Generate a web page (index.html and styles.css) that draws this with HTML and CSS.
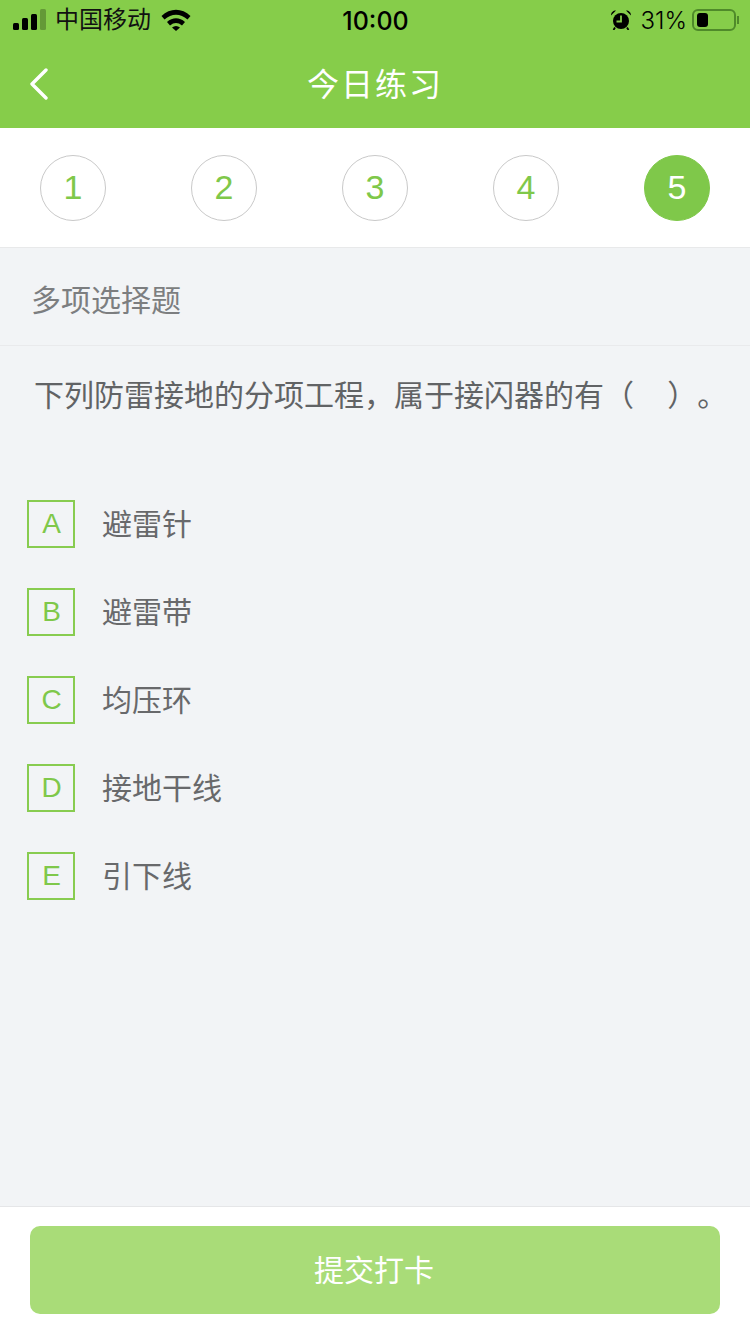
FILE: index.html
```html
<!DOCTYPE html>
<html lang="zh">
<head>
    <meta charset="UTF-8">
    <meta name="viewport" content="width=device-width, initial-scale=1.0">
    <title>今日练习</title>
    <link rel="stylesheet" href="styles.css">
</head>
<body>
    <div class="page">
        <header class="header">
            <div class="status-bar">
                <div class="status-left">
                    <svg class="signal" width="35" height="22" viewBox="0 0 35 22">
                        <rect x="1" y="14" width="6" height="7" rx="1.5" fill="#000"/>
                        <rect x="10" y="9" width="6" height="12" rx="1.5" fill="#000"/>
                        <rect x="19" y="5" width="6" height="16" rx="1.5" fill="#000"/>
                        <rect x="28" y="0" width="6" height="21" rx="1.5" fill="#000" opacity="0.25"/>
                    </svg>
                    <span class="carrier">中国移动</span>
                    <svg class="wifi" width="30" height="22" viewBox="0 0 30 22">
                        <path d="M0.500 7C9 -1.500 21 -1.500 29.500 7L26.500 10.500C19.500 4.200 10.500 4.200 3.500 10.500Z" fill="#000"/>
                        <path d="M6 13C11.500 8 18.500 8 24 13L21 16.500C17 13.200 13 13.200 9 16.500Z" fill="#000"/>
                        <path d="M11 18.500C13.500 16.500 16.500 16.500 19 18.500L15 22Z" fill="#000"/>
                    </svg>
                </div>
                <div class="status-time">10:00</div>
                <div class="status-right">
                    <svg class="alarm" width="20" height="20" viewBox="0 0 20 20">
                        <circle cx="10" cy="11" r="8" fill="#000"/>
                        <path d="M10 5.500V11.500H5.500" fill="none" stroke="#86cd4a" stroke-width="1.800"/>
                        <path d="M0 5.500C0 2.500 2 0.500 5 0.500ZM20 5.500C20 2.500 18 0.500 15 0.500Z" fill="#000"/>
                        <path d="M4 17.500L2.500 20M16 17.500L17.500 20" stroke="#000" stroke-width="1.800"/>
                    </svg>
                    <span class="battery-text">31%</span>
                    <div class="battery">
                        <div class="battery-level"></div>
                    </div>
                    <div class="battery-cap"></div>
                </div>
            </div>
            <div class="nav-bar">
                <svg class="back" width="20" height="32" viewBox="0 0 20 32">
                    <path d="M17 2L3 16L17 30" fill="none" stroke="#fff" stroke-width="3.400" stroke-linecap="round" stroke-linejoin="round"/>
                </svg>
                <h1 class="nav-title">今日练习</h1>
            </div>
        </header>

        <div class="steps">
            <div class="step">1</div>
            <div class="step">2</div>
            <div class="step">3</div>
            <div class="step">4</div>
            <div class="step active">5</div>
        </div>

        <main class="content">
            <div class="question-type">多项选择题</div>
            <p class="question">下列防雷接地的分项工程，属于接闪器的有（&nbsp;&nbsp;&nbsp;&nbsp;）。</p>
            <ul class="options">
                <li class="option"><span class="option-key">A</span><span class="option-text">避雷针</span></li>
                <li class="option"><span class="option-key">B</span><span class="option-text">避雷带</span></li>
                <li class="option"><span class="option-key">C</span><span class="option-text">均压环</span></li>
                <li class="option"><span class="option-key">D</span><span class="option-text">接地干线</span></li>
                <li class="option"><span class="option-key">E</span><span class="option-text">引下线</span></li>
            </ul>
        </main>

        <footer class="footer">
            <button class="submit">提交打卡</button>
        </footer>
    </div>
</body>
</html>
```

FILE: styles.css
```css
/* 全体 */
* {
    box-sizing: border-box;
}

body {
    margin: 0;
    font-family: "Liberation Sans", "Noto Sans CJK SC", sans-serif;
    background: #f2f4f6;
    text-spacing-trim: space-all;
}

.page {
    display: flex;
    flex-direction: column;
    width: 750px;
    height: 1334px;
    overflow: hidden;
}

/* ヘッダー */
.header {
    height: 128px;
    background: #86cd4a;
}

.status-bar {
    display: grid;
    grid-template-columns: 1fr auto 1fr;
    align-items: center;
    height: 40px;
    padding: 0 11px 0 12px;
    color: #000;
}

.status-left {
    display: flex;
    align-items: center;
}

.carrier {
    margin-left: 8px;
    font-size: 24px;
    line-height: 40px;
    color: #111;
}

.wifi {
    margin-left: 10px;
}

.status-time {
    font-family: Inter, "Liberation Sans", sans-serif;
    font-size: 25px;
    font-weight: 500;
    padding-top: 1px;
}

.status-right {
    display: flex;
    align-items: center;
    justify-content: flex-end;
}

.battery-text {
    margin-left: 10px;
    font-family: Inter, "Liberation Sans", sans-serif;
    font-size: 24px;
    font-weight: 300;
}

.battery {
    width: 44px;
    height: 22px;
    margin-left: 5px;
    padding: 2px 3px;
    border: 2px solid #4f8a2a;
    border-radius: 6px;
}

.battery-level {
    width: 11px;
    height: 100%;
    background: #000;
    border-radius: 3px;
}

.battery-cap {
    width: 2px;
    height: 8px;
    margin-left: 1px;
    background: #4f8a2a;
}

.nav-bar {
    position: relative;
    display: flex;
    align-items: center;
    justify-content: center;
    height: 88px;
}

.back {
    position: absolute;
    left: 29px;
    top: 28px;
}

.nav-title {
    margin: 0 0 4px;
    font-size: 32px;
    font-weight: 400;
    color: #fff;
    letter-spacing: 2px;
}

/* ステップ */
.steps {
    display: flex;
    justify-content: space-between;
    align-items: center;
    height: 120px;
    padding: 0 40px;
    background: #fff;
    border-bottom: 1px solid #e8e9ea;
}

.step {
    display: flex;
    align-items: center;
    justify-content: center;
    width: 66px;
    height: 66px;
    border: 1px solid #c9c9c9;
    border-radius: 50%;
    font-size: 34px;
    color: #7fc84a;
}

.step.active {
    background: #7fc84a;
    border-color: #7fc84a;
    color: #fff;
}

/* 問題 */
.content {
    flex: 1;
}

.question-type {
    height: 98px;
    padding: 0 31px;
    font-size: 30px;
    line-height: 106px;
    color: #7c7e80;
    border-bottom: 1px solid #e9eaec;
}

.question {
    margin: 0;
    padding: 30px 0 0 34px;
    font-size: 30px;
    line-height: 40px;
    color: #616365;
    white-space: nowrap;
}

.options {
    margin: 84px 0 0;
    padding: 0 0 0 27px;
    list-style: none;
}

.option {
    display: flex;
    align-items: center;
    height: 48px;
    margin-bottom: 40px;
}

.option-key {
    display: flex;
    align-items: center;
    justify-content: center;
    width: 48px;
    height: 48px;
    padding-left: 1px;
    border: 2px solid #88cc50;
    font-size: 28px;
    color: #7fc84a;
}

.option-text {
    margin: -4px 0 0 27px;
    font-size: 30px;
    color: #68696b;
}

/* フッター */
.footer {
    height: 128px;
    padding: 19px 30px 0;
    background: #fff;
    border-top: 1px solid #e5e6e8;
}

.submit {
    display: block;
    width: 100%;
    height: 88px;
    padding: 0 2px 4px 0;
    border: none;
    border-radius: 10px;
    background: #a9dc78;
    font-family: inherit;
    font-size: 30px;
    color: #fff;
}
```
